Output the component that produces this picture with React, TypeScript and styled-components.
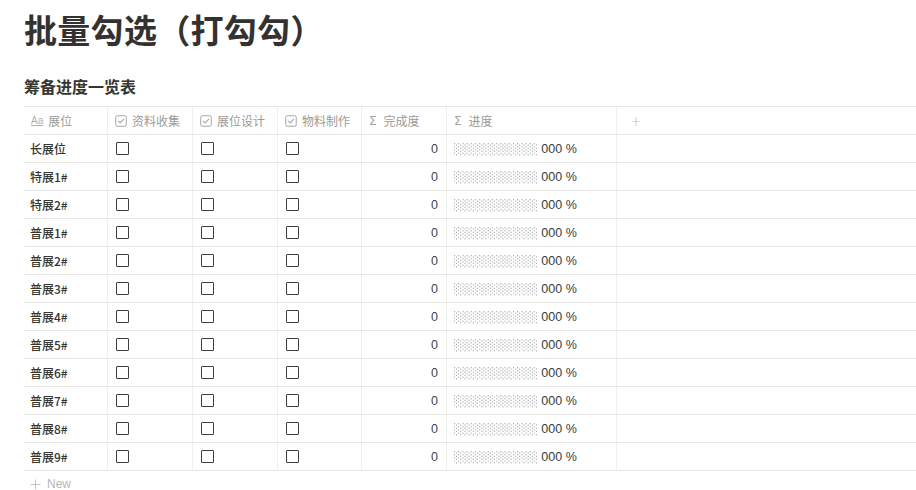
import React from 'react';
import styled, { createGlobalStyle } from 'styled-components';

const GlobalStyle = createGlobalStyle`
  html, body {
    margin: 0;
    padding: 0;
    background: #fff;
  }
  body {
    font-family: "Liberation Sans", "Noto Sans CJK SC", sans-serif;
    color: #37352f;
    overflow: hidden;
    -webkit-font-smoothing: antialiased;
  }
`;

const rows = [
  '长展位',
  '特展1#',
  '特展2#',
  '普展1#',
  '普展2#',
  '普展3#',
  '普展4#',
  '普展5#',
  '普展6#',
  '普展7#',
  '普展8#',
  '普展9#',
];

const GRID = '84px 85px 85px 84px 85px 170px 1fr';

const Page = styled.div`
  width: 916px;
  height: 490px;
  padding: 8px 0 0 24px;
  box-sizing: border-box;
  overflow: hidden;
`;

const Title = styled.h1`
  margin: 0;
  font-family: "Noto Sans CJK SC", sans-serif;
  font-size: 33px;
  line-height: 42px;
  font-weight: 700;
  letter-spacing: 0.3px;
  color: #333230;
`;

const Subtitle = styled.h2`
  margin: 24px 0 0;
  font-family: "Noto Sans CJK SC", sans-serif;
  font-size: 16px;
  line-height: 24px;
  font-weight: 600;
  color: #37352f;
`;

const Table = styled.div`
  margin-top: 8px;
  border-top: 1px solid #e6e6e4;
`;

const Row = styled.div`
  display: grid;
  grid-template-columns: ${GRID};
  height: 28px;
  border-bottom: 1px solid #e6e6e4;
  box-sizing: border-box;
`;

const Cell = styled.div<{ $align?: 'left' | 'right' }>`
  display: flex;
  align-items: center;
  justify-content: ${p => (p.$align === 'right' ? 'flex-end' : 'flex-start')};
  gap: 5px;
  padding: 0 8px 0 7px;
  font-size: 12px;
  white-space: nowrap;
  border-right: 1px solid #efefed;
  &:last-child {
    border-right: none;
  }
`;

const HeadCell = styled(Cell)`
  color: #9b9a97;
  font-family: "Noto Sans CJK SC", sans-serif;
  font-size: 12px;
`;

const NameCell = styled(Cell)`
  font-family: "Noto Sans CJK SC", sans-serif;
  font-weight: 500;
  padding-left: 6px;
`;

const AaIcon = styled.span`
  font-family: "Liberation Sans", sans-serif;
  font-size: 10px;
  color: #b0afab;
  text-decoration: underline;
  text-underline-offset: 1px;
`;

const Sigma = styled.span`
  font-family: "DejaVu Sans", sans-serif;
  font-size: 12px;
  color: #a3a29e;
  margin-right: 2px;
`;

const Plus = styled.span`
  font-family: "DejaVu Sans", sans-serif;
  font-size: 14px;
  font-weight: 300;
  color: #c4c3c0;
  margin-left: 6px;
`;

const Box = styled.span`
  display: inline-block;
  width: 13px;
  height: 13px;
  box-sizing: border-box;
  border: 1.5px solid #3f3e3a;
  border-radius: 1px;
  margin-left: 1px;
`;

const Num = styled.span`
  font-size: 12.5px;
  color: #444;
`;

const Bar = styled.span`
  display: inline-block;
  font-family: "DejaVu Sans Mono", monospace;
  font-size: 14px;
  line-height: 16px;
  color: #a6a6a6;
  transform: scaleY(0.75);
  will-change: transform;
`;

const Percent = styled.span`
  font-size: 12.5px;
  color: #3a3a3a;
  margin-left: -2px;
`;

const NewRow = styled.div`
  display: flex;
  align-items: center;
  gap: 6px;
  height: 26px;
  padding-left: 6px;
  font-size: 12px;
  color: #b7b6b2;
`;

const CheckIcon: React.FC = () => (
  <svg width="12" height="12" viewBox="0 0 12 12" fill="none" aria-hidden="true">
    <rect x="0.75" y="0.75" width="10.5" height="10.5" rx="1.5" stroke="#a7a6a2" strokeWidth="1" />
    <path d="M3.3 6.1 L5.2 7.9 L8.8 4.1" stroke="#a7a6a2" strokeWidth="1.1" strokeLinecap="round" strokeLinejoin="round" />
  </svg>
);

const PlusIcon: React.FC = () => (
  <svg width="11" height="11" viewBox="0 0 11 11" aria-hidden="true">
    <path d="M5.5 0.5 V10.5 M0.5 5.5 H10.5" stroke="#c4c3c0" strokeWidth="1" />
  </svg>
);

const App: React.FC = () => {
  return (
    <Page>
      <GlobalStyle />
      <Title>批量勾选（打勾勾）</Title>
      <Subtitle>筹备进度一览表</Subtitle>
      <Table>
        <Row>
          <HeadCell>
            <AaIcon>Aa</AaIcon>展位
          </HeadCell>
          <HeadCell>
            <CheckIcon />资料收集
          </HeadCell>
          <HeadCell>
            <CheckIcon />展位设计
          </HeadCell>
          <HeadCell>
            <CheckIcon />物料制作
          </HeadCell>
          <HeadCell>
            <Sigma>Σ</Sigma>完成度
          </HeadCell>
          <HeadCell>
            <Sigma>Σ</Sigma>进度
          </HeadCell>
          <HeadCell>
            <Plus>+</Plus>
          </HeadCell>
        </Row>
        {rows.map(name => (
          <Row key={name}>
            <NameCell>{name}</NameCell>
            <Cell>
              <Box />
            </Cell>
            <Cell>
              <Box />
            </Cell>
            <Cell>
              <Box />
            </Cell>
            <Cell $align="right">
              <Num>0</Num>
            </Cell>
            <Cell>
              <Bar>░░░░░░░░░░</Bar>
              <Percent>000 %</Percent>
            </Cell>
            <Cell />
          </Row>
        ))}
      </Table>
      <NewRow>
        <PlusIcon />
        New
      </NewRow>
    </Page>
  );
};

export default App;
